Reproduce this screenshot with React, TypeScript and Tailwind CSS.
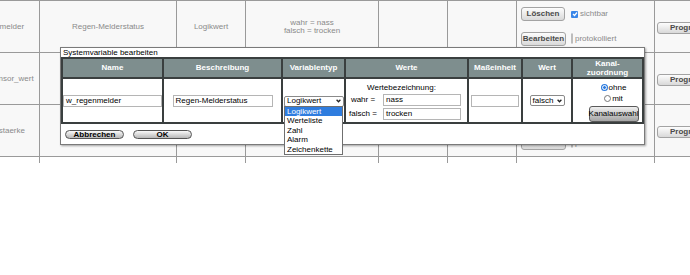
import React from "react";

const Btn = ({ children, className = "" }: { children: React.ReactNode; className?: string }) => (
  <span
    className={`inline-flex items-center justify-center rounded-[3px] border border-[#a3a3a3] bg-linear-to-b from-[#fdfdfd] to-[#d9d9d9] font-bold text-[#4a4a4a] whitespace-nowrap ${className}`}
  >
    {children}
  </span>
);

const Check = ({ checked }: { checked?: boolean }) =>
  checked ? (
    <span className="w-[7px] h-[7px] rounded-[1px] bg-[#3a86e8] flex items-center justify-center">
      <svg width="6" height="6" viewBox="0 0 6 6">
        <polyline points="1,3 2.5,4.5 5,1.5" fill="none" stroke="white" strokeWidth="1.2" />
      </svg>
    </span>
  ) : (
    <span className="w-[7px] h-[7px] rounded-[1px] border border-[#bdbdbd] bg-white" />
  );

const Chevron = () => (
  <svg width="5" height="4" viewBox="0 0 5 4" className="shrink-0">
    <polyline points="0.6,0.8 2.5,2.8 4.4,0.8" fill="none" stroke="#222" strokeWidth="1.3" />
  </svg>
);

const Radio = ({ checked }: { checked?: boolean }) =>
  checked ? (
    <span className="w-[7px] h-[7px] rounded-full bg-[#2f7ddf] flex items-center justify-center">
      <span className="w-[5px] h-[5px] rounded-full border border-white bg-[#2f7ddf]" />
    </span>
  ) : (
    <span className="w-[7px] h-[7px] rounded-full border border-[#777] bg-white" />
  );

const ActionCell = () => (
  <div className="flex flex-col justify-center gap-[11px] pl-[4px]">
    <div className="flex items-center">
      <Btn className="w-[44px] h-[14px]">Löschen</Btn>
      <span className="ml-[6px]"><Check checked /></span>
      <span className="ml-[2px] text-[#8a8a8a]">sichtbar</span>
    </div>
    <div className="flex items-center">
      <Btn className="w-[45px] h-[14px]">Bearbeiten</Btn>
      <span className="ml-[5px]"><Check /></span>
      <span className="ml-[2px] text-[#8a8a8a]">protokolliert</span>
    </div>
  </div>
);

const rows = [
  { name: "w_regenmelder", desc: "Regen-Melderstatus", type: "Logikwert", values: ["wahr = nass", "falsch = trocken"] },
  { name: "w_regensensor_wert", desc: "", type: "", values: [] },
  { name: "w_regenstaerke", desc: "", type: "", values: [] },
];

const cell = "border-r border-b border-[#9a9a9a] h-[52px]";

const BackgroundTable = () => (
  <div className="ml-[-46px] w-[840px] grid grid-cols-[86px_137px_69px_133px_69px_69px_138px_139px] border-t border-[#9a9a9a] bg-[#f8f8f8] text-[#8a8a8a]">
    {rows.map((r, i) => (
      <React.Fragment key={i}>
        <div className={`${cell} flex items-center justify-center`}>{r.name}</div>
        <div className={`${cell} flex items-center justify-center`}>{r.desc}</div>
        <div className={`${cell} flex items-center justify-center`}>{r.type}</div>
        <div className={`${cell} flex flex-col items-center justify-center leading-[8px]`}>
          {r.values.map((v) => (
            <span key={v}>{v}</span>
          ))}
        </div>
        <div className={cell} />
        <div className={cell} />
        <div className={`${cell} flex`}>
          <ActionCell />
        </div>
        <div className={`${cell} flex items-center pl-[2px] pt-[2px]`}>
          <Btn className="w-[80px] h-[12px] justify-start pl-[12px]">Programme</Btn>
        </div>
      </React.Fragment>
    ))}
    {Array.from({ length: 8 }).map((_, i) => (
      <div key={i} className="h-[6px] border-r border-[#9a9a9a] bg-white" />
    ))}
  </div>
);

const headers = ["Name", "Beschreibung", "Variablentyp", "Werte", "Maßeinheit", "Wert"];

const Input = ({ value, className = "" }: { value: string; className?: string }) => (
  <span className={`flex items-center h-[12px] border border-[#b5b5b5] bg-white px-[2px] text-black ${className}`}>
    {value}
  </span>
);

const EditDialog = () => (
  <div className="absolute left-[60px] top-[47px] w-[585px] h-[98px] border border-[#7a7a7a] bg-white shadow-[1px_1px_2px_rgba(0,0,0,0.35)] text-black">
    <div className="h-[9px] leading-[9px] pl-[2px]">Systemvariable bearbeiten</div>
    <div className="grid grid-cols-[99px_117px_61px_121px_52px_48px_69px] gap-[2px] p-[2px] bg-[#3a3f3f]">
      {headers.map((h) => (
        <div key={h} className="h-[18px] bg-[#7e8e8e] text-white font-bold flex items-center justify-center">
          {h}
        </div>
      ))}
      <div className="h-[18px] bg-[#7e8e8e] text-white font-bold flex flex-col items-center justify-center leading-[9px]">
        <span>Kanal-</span>
        <span>zuordnung</span>
      </div>

      <div className="h-[43px] bg-white flex items-center">
        <Input value="w_regenmelder" className="w-full" />
      </div>
      <div className="h-[43px] bg-white flex items-center justify-center">
        <Input value="Regen-Melderstatus" className="w-[100px]" />
      </div>
      <div className="h-[43px] bg-white flex items-center pl-[1px] pt-[1px]">
        <span className="flex items-center justify-between w-[60px] h-[11px] border border-[#8a8a8a] rounded-[2px] bg-white px-[2px]">
          Logikwert
          <Chevron />
        </span>
      </div>
      <div className="h-[43px] bg-white flex flex-col justify-center pt-[1px]">
        <div className="text-center leading-[9px] mb-[2px] pr-[10px]">Wertebezeichnung:</div>
        <div className="grid grid-cols-[34px_78px] gap-x-[3px] gap-y-[2px] items-center">
          <span className="text-center">wahr =</span>
          <Input value="nass" />
          <span className="text-center">falsch =</span>
          <Input value="trocken" />
        </div>
      </div>
      <div className="h-[43px] bg-white flex items-center justify-center">
        <Input value="" className="w-[48px]" />
      </div>
      <div className="h-[43px] bg-white flex items-center justify-center">
        <span className="flex items-center justify-between w-[35px] h-[11px] border border-[#8a8a8a] rounded-[2px] bg-white px-[2px]">
          falsch
          <Chevron />
        </span>
      </div>
      <div className="h-[43px] bg-white flex flex-col items-center justify-center pl-[12px] pt-[3px]">
        <div className="flex items-center gap-[1px] leading-[11px]">
          <Radio checked />
          <span>ohne</span>
        </div>
        <div className="flex items-center gap-[1px] leading-[11px]">
          <Radio />
          <span>mit</span>
        </div>
        <span className="mt-[2px] w-[50px] h-[16px] flex items-center justify-center rounded-[3px] border border-[#5a5a5a] bg-linear-to-b from-[#f0f0f0] to-[#a5a5a5] whitespace-nowrap">
          Kanalauswahl
        </span>
      </div>
    </div>
    <div className="flex gap-[9px] pl-[4px] pt-[6px]">
      <span className="w-[59px] h-[9px] rounded-full border border-[#555] bg-linear-to-b from-[#fafafa] to-[#b8b8b8] font-bold flex items-center justify-center">
        Abbrechen
      </span>
      <span className="w-[59px] h-[9px] rounded-full border border-[#555] bg-linear-to-b from-[#fafafa] to-[#b8b8b8] font-bold flex items-center justify-center">
        OK
      </span>
    </div>
  </div>
);

const options = ["Logikwert", "Werteliste", "Zahl", "Alarm", "Zeichenkette"];

const TypeDropdown = () => (
  <div className="absolute left-[284px] top-[106px] w-[59px] border border-[#6f6f6f] bg-white text-black">
    {options.map((o, i) => (
      <div key={o} className={`px-[2px] leading-[9.4px] ${i === 0 ? "bg-[#2f7ddf] text-white" : ""}`}>
        {o}
      </div>
    ))}
  </div>
);

export default function App() {
  return (
    <div className="relative w-[690px] h-[275px] overflow-hidden bg-white font-['Liberation_Sans',Arial,sans-serif] text-[8px]">
      <BackgroundTable />
      <EditDialog />
      <TypeDropdown />
    </div>
  );
}
